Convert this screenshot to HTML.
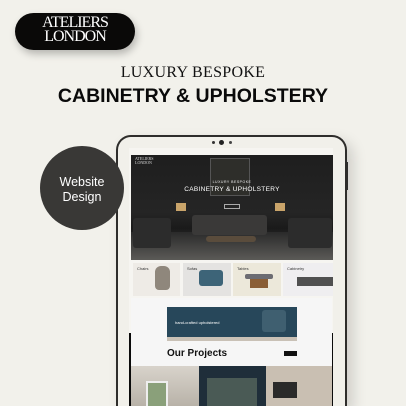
<!DOCTYPE html>
<html style="width:406px;height:406px;overflow:hidden"><head><style>
*{margin:0;padding:0;box-sizing:border-box}
body{width:406px;height:406px;background:#f2f1eb;overflow:hidden;font-family:"Liberation Sans",sans-serif}
#w{position:relative;width:406px;height:406px;overflow:hidden}
.abs{position:absolute}
</style></head><body><div id="w">
<div class="abs" style="left:15px;top:13px;width:120px;height:37px;background:#0a0908;border-radius:19px;box-shadow:2px 4px 8px rgba(0,0,0,.25)"></div>
<div class="abs" style="left:30px;top:16px;width:90px;color:#fff;font-family:'Liberation Serif',serif;font-size:16px;line-height:14px;letter-spacing:-1px;text-align:center">ATELIERS<br>LONDON</div>
<div class="abs" style="left:0;top:64px;width:386px;text-align:center;font-family:'Liberation Serif',serif;font-size:16px;color:#111;letter-spacing:0.3px">LUXURY BESPOKE</div>
<div class="abs" style="left:0;top:85px;width:386px;text-align:center;font-size:19.5px;font-weight:bold;color:#0a0a0a">CABINETRY &amp; UPHOLSTERY</div>

<div class="abs" style="left:116px;top:135px;width:231px;height:271px;background:#f1f0ea;border:2px solid #2e2d2b;border-bottom:none;border-radius:15px 15px 0 0;box-shadow:6px 6px 14px rgba(0,0,0,.15)"></div>
<div class="abs" style="left:346px;top:162px;width:2px;height:28px;background:#2e2d2b"></div>
<div class="abs" style="left:212px;top:141px;width:3px;height:3px;border-radius:50%;background:#333"></div>
<div class="abs" style="left:219px;top:140px;width:5px;height:5px;border-radius:50%;background:#222"></div>
<div class="abs" style="left:229px;top:141px;width:3px;height:3px;border-radius:50%;background:#444"></div>
<div class="abs" style="left:129px;top:148px;width:204px;height:258px;background:#f6f5f1"></div>
<div class="abs" style="left:129px;top:333px;width:204px;height:73px;background:#0b0b0b"></div>
<div class="abs" style="left:131px;top:155px;width:202px;height:105px;background:linear-gradient(180deg,#1e1e1e 0%,#252525 55%,#1a1a1a 70%,#444 100%)"></div>
<div class="abs" style="left:210px;top:158px;width:40px;height:38px;background:#2e2e2a;border:1px solid #555"></div>
<div class="abs" style="left:131px;top:232px;width:202px;height:28px;background:linear-gradient(#2a2a2a,#5b5a57)"></div>
<div class="abs" style="left:192px;top:215px;width:75px;height:20px;background:#3a3938;border-radius:3px"></div>
<div class="abs" style="left:176px;top:203px;width:10px;height:8px;background:#c9a46a"></div>
<div class="abs" style="left:275px;top:203px;width:10px;height:8px;background:#c9a46a"></div>
<div class="abs" style="left:133px;top:218px;width:38px;height:30px;background:#2c2c2c;border-radius:3px"></div>
<div class="abs" style="left:288px;top:218px;width:44px;height:30px;background:#2c2c2c;border-radius:3px"></div>
<div class="abs" style="left:206px;top:236px;width:50px;height:6px;background:#5a4c3c;border-radius:3px"></div>
<div class="abs" style="left:131px;top:180px;width:202px;text-align:center;color:#eee;font-size:3.5px;letter-spacing:.5px">LUXURY BESPOKE</div>
<div class="abs" style="left:131px;top:186px;width:202px;text-align:center;color:#fff;font-size:6.5px;letter-spacing:.3px">CABINETRY &amp; UPHOLSTERY</div>
<div class="abs" style="left:224px;top:204px;width:16px;height:5px;border:1px solid #aaa"></div>
<div class="abs" style="left:135px;top:157px;color:#ddd;font-family:'Liberation Serif',serif;font-size:4px;line-height:4px">ATELIERS<br>LONDON</div>
<div class="abs" style="left:133px;top:263px;width:47px;height:33px;background:#eeebe6"></div>
<div class="abs" style="left:155px;top:266px;width:15px;height:24px;background:#8f877c;border-radius:6px 6px 4px 4px"></div>
<div class="abs" style="left:183px;top:263px;width:48px;height:33px;background:#e4e3e1"></div>
<div class="abs" style="left:199px;top:270px;width:24px;height:16px;background:#3d6478;border-radius:3px"></div>
<div class="abs" style="left:233px;top:263px;width:48px;height:33px;background:#ece8da"></div>
<div class="abs" style="left:245px;top:274px;width:28px;height:5px;background:#6c6c72;border-radius:2px"></div>
<div class="abs" style="left:250px;top:279px;width:18px;height:9px;background:#8a5e35"></div>
<div class="abs" style="left:283px;top:263px;width:50px;height:33px;background:#efeef0"></div>
<div class="abs" style="left:297px;top:277px;width:36px;height:9px;background:#505050"></div>
<div class="abs" style="left:137px;top:266px;font-size:4px;color:#333">Chairs</div>
<div class="abs" style="left:187px;top:266px;font-size:4px;color:#333">Sofas</div>
<div class="abs" style="left:237px;top:266px;font-size:4px;color:#333">Tables</div>
<div class="abs" style="left:287px;top:266px;font-size:4px;color:#333">Cabinetry</div>
<div class="abs" style="left:131px;top:298px;width:201px;height:68px;background:#f6f6f6"></div>
<div class="abs" style="left:167px;top:307px;width:130px;height:34px;background:#27475a"></div>
<div class="abs" style="left:262px;top:310px;width:24px;height:22px;background:#3f5f70;border-radius:3px"></div>
<div class="abs" style="left:167px;top:337px;width:130px;height:4px;background:#c9c1b6"></div>
<div class="abs" style="left:175px;top:320px;color:#fff;font-size:4px">hand-crafted upholstered</div>
<div class="abs" style="left:167px;top:348px;font-size:10px;font-weight:bold;color:#111">Our Projects</div>
<div class="abs" style="left:284px;top:351px;width:13px;height:5px;background:#111"></div>
<div class="abs" style="left:131px;top:366px;width:68px;height:40px;background:linear-gradient(#d8d3cb,#b8b2a8)"></div>
<div class="abs" style="left:146px;top:381px;width:22px;height:25px;background:#8aa07a;border:2px solid #eee;border-bottom:none"></div>
<div class="abs" style="left:199px;top:366px;width:67px;height:40px;background:#1f2e3a"></div>
<div class="abs" style="left:207px;top:378px;width:50px;height:28px;background:#4a5a55"></div>
<div class="abs" style="left:266px;top:366px;width:66px;height:40px;background:#c9bfb2"></div>
<div class="abs" style="left:273px;top:382px;width:24px;height:16px;background:#2a2a2a"></div>
<div class="abs" style="left:40px;top:146px;width:84px;height:84px;border-radius:50%;background:#393836"></div>
<div class="abs" style="left:40px;top:175px;width:84px;text-align:center;color:#fff;font-size:12.5px;line-height:15px">Website<br>Design</div>
</div></body></html>
